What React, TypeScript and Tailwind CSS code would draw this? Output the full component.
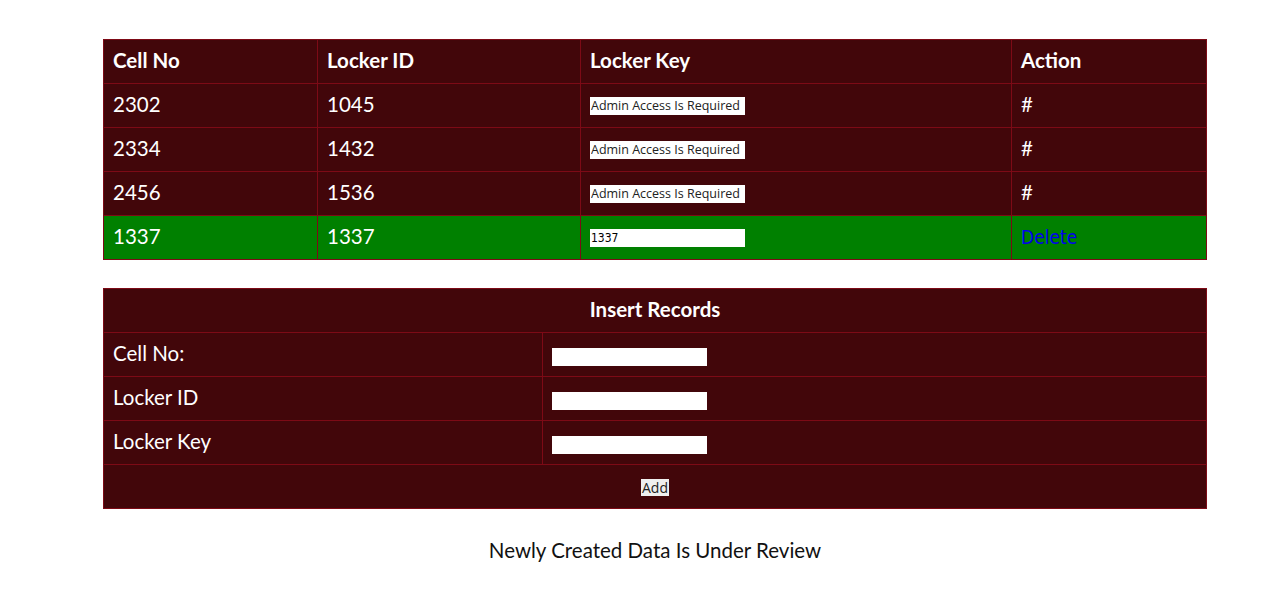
import React from "react";

type Locker = {
  cell: string;
  id: string;
  key: string;
  mine?: boolean;
};

const lockers: Locker[] = [
  { cell: "2302", id: "1045", key: "Admin Access Is Required" },
  { cell: "2334", id: "1432", key: "Admin Access Is Required" },
  { cell: "2456", id: "1536", key: "Admin Access Is Required" },
  { cell: "1337", id: "1337", key: "1337", mine: true },
];

const cell = "border border-[#7d0a16] h-[44px] px-[9px] pb-[2px] align-middle";
const field =
  "w-[155px] h-[18px] bg-white px-[1px] font-['Open_Sans',sans-serif] text-[12.5px] leading-[18px] text-[#222] outline-none";

export default function App() {
  return (
    <div className="min-h-screen bg-white font-['Lato','Open_Sans',sans-serif] text-white">
      <div className="ml-[103px] w-[1104px] pt-[39px]">
        {/* Lockers */}
        <table className="w-full border-collapse bg-[#42060a] text-[20.5px]">
          <thead>
            <tr>
              <th className={`${cell} text-left w-[214px] font-bold`}>Cell No</th>
              <th className={`${cell} text-left w-[263px] font-bold`}>Locker ID</th>
              <th className={`${cell} text-left w-[431px] font-bold`}>Locker Key</th>
              <th className={`${cell} text-left font-bold`}>Action</th>
            </tr>
          </thead>
          <tbody>
            {lockers.map(l => (
              <tr key={l.cell} className={l.mine ? "bg-[#008000]" : ""}>
                <td className={cell}>{l.cell}</td>
                <td className={cell}>{l.id}</td>
                <td className={cell}>
                  <input
                    readOnly
                    value={l.key}
                    className={`${field} block mt-[3px] ${l.mine ? "!font-['DejaVu_Sans_Condensed','DejaVu_Sans',sans-serif] !text-[12px] text-black" : ""}`}
                  />
                </td>
                <td className={cell}>
                  {l.mine ? (
                    <a href="#" className="text-[#0000ee] font-['DejaVu_Sans_Condensed','DejaVu_Sans',sans-serif] text-[19px]">
                      Delete
                    </a>
                  ) : (
                    "#"
                  )}
                </td>
              </tr>
            ))}
          </tbody>
        </table>

        {/* Insert form */}
        <table className="mt-[28px] w-full border-collapse bg-[#42060a] text-[20.5px]">
          <thead>
            <tr>
              <th colSpan={2} className={`${cell} text-center font-bold`}>
                Insert Records
              </th>
            </tr>
          </thead>
          <tbody>
            {["Cell No:", "Locker ID", "Locker Key"].map(label => (
              <tr key={label}>
                <td className={`${cell} w-[439px]`}>{label}</td>
                <td className={cell}>
                  <input className={`${field} block mt-[6px]`} />
                </td>
              </tr>
            ))}
            <tr>
              <td colSpan={2} className={`${cell} text-center`}>
                <button className="mt-[2px] bg-[#efefef] px-[1px] font-['Open_Sans',sans-serif] text-[14px] leading-[17px] text-[#222]">
                  Add
                </button>
              </td>
            </tr>
          </tbody>
        </table>

        <p className="mt-[26px] text-center text-[20.5px] text-[#111]">
          Newly Created Data Is Under Review
        </p>
      </div>
    </div>
  );
}
